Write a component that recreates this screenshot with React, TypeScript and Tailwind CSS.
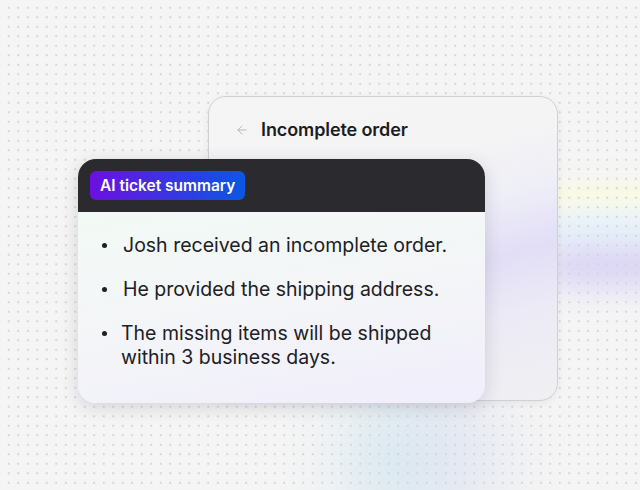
import { ArrowLeft } from "lucide-react"

const points = [
  "Josh received an incomplete order.",
  "He provided the shipping address.",
  "The missing items will be shipped within 3 business days.",
]

export default function App() {
  return (
    <div className="relative w-[640px] h-[490px] overflow-hidden bg-[#f5f5f5] font-['Inter',sans-serif]">
      {/* soft colour glows */}
      <div className="absolute left-[545px] top-[185px] w-[160px] h-[28px] rounded-full bg-[#fbfbe0] blur-md" />
      <div className="absolute left-[545px] top-[212px] w-[160px] h-[34px] rounded-full bg-[#e6f3fb] blur-md" />
      <div className="absolute left-[545px] top-[246px] w-[170px] h-[40px] rounded-full bg-[#d8d2f5] blur-lg" />
      <div className="absolute left-[350px] top-[395px] w-[110px] h-[130px] rounded-full bg-[#d2e7f0] blur-2xl" />
      <div className="absolute left-[420px] top-[400px] w-[70px] h-[110px] rounded-full bg-[#e2e2f2] blur-2xl" />

      {/* dot grid */}
      <div className="absolute inset-0 bg-[radial-gradient(circle,#d4d4d4_0.7px,transparent_1.1px)] bg-[length:9.5px_9.5px] bg-[position:4px_3px]" />

      <div className="relative pl-[208px] pt-[96px]">
        {/* back card */}
        <div className="relative w-[350px] h-[305px] rounded-[18px] border border-[#d0d0d3] bg-[linear-gradient(165deg,#f5f5f5_0%,#f4f4f5_30%,#eeeef6_45%,#e2def6_60%,#eceaf5_75%,#f0f0f2_100%)] shadow-[0_2px_8px_rgba(0,0,0,0.06)]">
          <div className="flex items-center gap-[12px] pl-[26px] pt-[19px]">
            <ArrowLeft className="w-[14px] h-[14px] text-[#b4b4b8]" strokeWidth={1.6} />
            <span className="text-[18px] font-semibold text-[#1c1c1f] tracking-[-0.1px]">Incomplete order</span>
          </div>

          {/* front card */}
          <div className="absolute left-[-131px] top-[62px] w-[407px] rounded-[18px] overflow-hidden shadow-[0_4px_18px_rgba(40,40,70,0.16)]">
            <div className="h-[53px] bg-[#2a2a2f] flex items-center px-[12px]">
              <span className="px-[10px] h-[29px] flex items-center rounded-[6px] bg-[linear-gradient(90deg,#6c10e0,#0a58e2)] text-white text-[15.5px] font-semibold">
                AI ticket summary
              </span>
            </div>
            <ul className="bg-[linear-gradient(170deg,#f2faf5_0%,#f4f5f8_50%,#f0eefb_100%)] pt-[21px] pb-[34px] pl-[24px] pr-[20px] flex flex-col gap-[20px]">
              {points.map((p, i) => (
                <li key={i} className="flex items-start text-[19.5px] leading-[24px] text-[#202024]">
                  <span className="w-[5px] h-[5px] rounded-full bg-[#202024] mt-[10px] shrink-0" />
                  <span className={i === 2 ? "ml-[14px] w-[330px]" : "ml-[16px]"}>{p}</span>
                </li>
              ))}
            </ul>
          </div>
        </div>
      </div>
    </div>
  )
}
